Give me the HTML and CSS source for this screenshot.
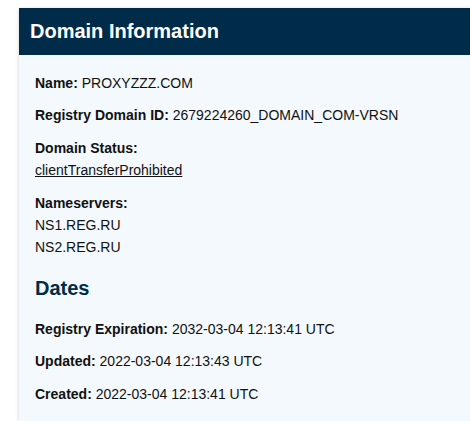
FILE: index.html
```html
<!DOCTYPE html>
<html>
<head>
<meta charset="utf-8">
<link rel="stylesheet" href="styles.css">
</head>
<body>
<div class="page">
  <section class="card">
    <header class="card-head"><h2 class="title">Domain Information</h2></header>
    <div class="card-body">
      <p class="row"><b>Name:</b> PROXYZZZ.COM</p>
      <p class="row"><b>Registry Domain ID:</b> 2679224260_DOMAIN_COM-VRSN</p>
      <div class="row"><b>Domain Status:</b><br><a class="link" href="#">clientTransferProhibited</a></div>
      <div class="row"><b>Nameservers:</b><br>NS1.REG.RU<br>NS2.REG.RU</div>
      <h3 class="sub">Dates</h3>
      <p class="row"><b>Registry Expiration:</b> 2032-03-04 12:13:41 UTC</p>
      <p class="row"><b>Updated:</b> 2022-03-04 12:13:43 UTC</p>
      <p class="row"><b>Created:</b> 2022-03-04 12:13:41 UTC</p>
    </div>
  </section>
</div>
</body>
</html>
```
FILE: styles.css
```css
html, body { margin: 0; padding: 0; background: #fff; overflow: hidden; }
body { font-family: "Liberation Sans", Arial, sans-serif; color: #111; }
.page { padding: 8px 0 0 19px; }
.card {
  width: 470px;
  background: #f3f9fd;
  box-shadow: 0 1px 4px rgba(0,0,0,0.18);
}
.card-head { background: #002b49; height: 47px; display: flex; align-items: center; padding: 0 11px; }
.title { margin: 0; color: #fff; font-size: 20px; font-weight: bold; }
.card-body { padding: 17px 16px 16px; font-size: 14px; line-height: 1.6; }
.row { margin: 0 0 10px; }
.row:last-child { margin-bottom: 0; }
.link { color: #111; text-decoration: underline; }
.sub { margin: 16px 0 17px; font-size: 20px; line-height: 26px; color: #002b49; font-weight: bold; }
```
